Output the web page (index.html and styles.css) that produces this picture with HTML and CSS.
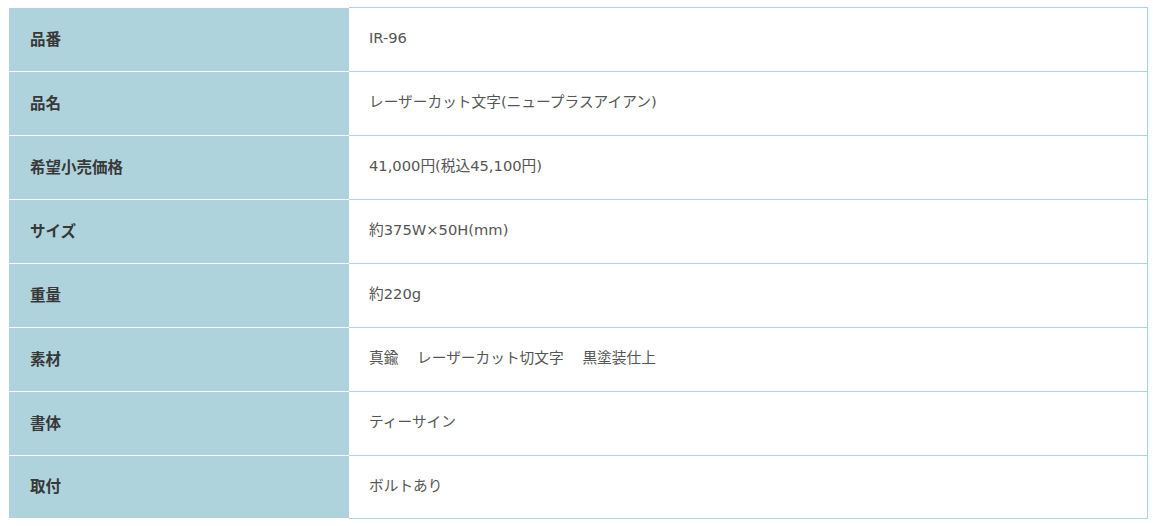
FILE: index.html
```html
<!DOCTYPE html>
<html lang="ja">
<head>
<meta charset="utf-8">
<link rel="stylesheet" href="styles.css">
</head>
<body>
<table class="spec">
  <tbody>
    <tr><th>品番</th><td>IR-96</td></tr>
    <tr><th>品名</th><td>レーザーカット文字(ニュープラスアイアン)</td></tr>
    <tr><th>希望小売価格</th><td>41,000円(税込45,100円)</td></tr>
    <tr><th>サイズ</th><td>約375W×50H(mm)</td></tr>
    <tr><th>重量</th><td>約220g</td></tr>
    <tr><th>素材</th><td>真鍮<span class="sp">　</span>レーザーカット切文字<span class="sp">　</span>黒塗装仕上</td></tr>
    <tr><th>書体</th><td>ティーサイン</td></tr>
    <tr><th>取付</th><td>ボルトあり</td></tr>
  </tbody>
</table>
</body>
</html>
```

FILE: styles.css
```css
html, body {
  margin: 0;
  padding: 0;
  background: #fff;
}
body {
  padding: 7px 5px 0 8px;
  font-family: "DejaVu Sans", "Noto Sans CJK JP", sans-serif;
  color: #333;
}
.spec {
  width: 1140px;
  border-collapse: separate;
  border-spacing: 0;
  font-size: 14.7px;
}
.spec th,
.spec td {
  height: 64px;
  box-sizing: border-box;
  vertical-align: middle;
  text-align: left;
  padding: 0 20px 2px;
  line-height: 1.4;
}
.spec th {
  width: 341px;
  background: #afd3dc;
  font-family: "Noto Sans CJK JP", sans-serif;
  font-size: 15.5px;
  font-weight: bold;
  color: #383838;
  border-top: 1px solid #fff;
  border-left: 1px solid #fff;
  padding-left: 21px;
}
.spec tr:last-child th {
  border-bottom: 1px solid #fff;
}
.spec td {
  border-top: 1px solid #afd3dc;
  border-right: 1px solid #afd3dc;
  color: #555;
}
.spec tr:last-child td {
  border-bottom: 1px solid #afd3dc;
}
.spec .sp {
  letter-spacing: 4px;
}
```
